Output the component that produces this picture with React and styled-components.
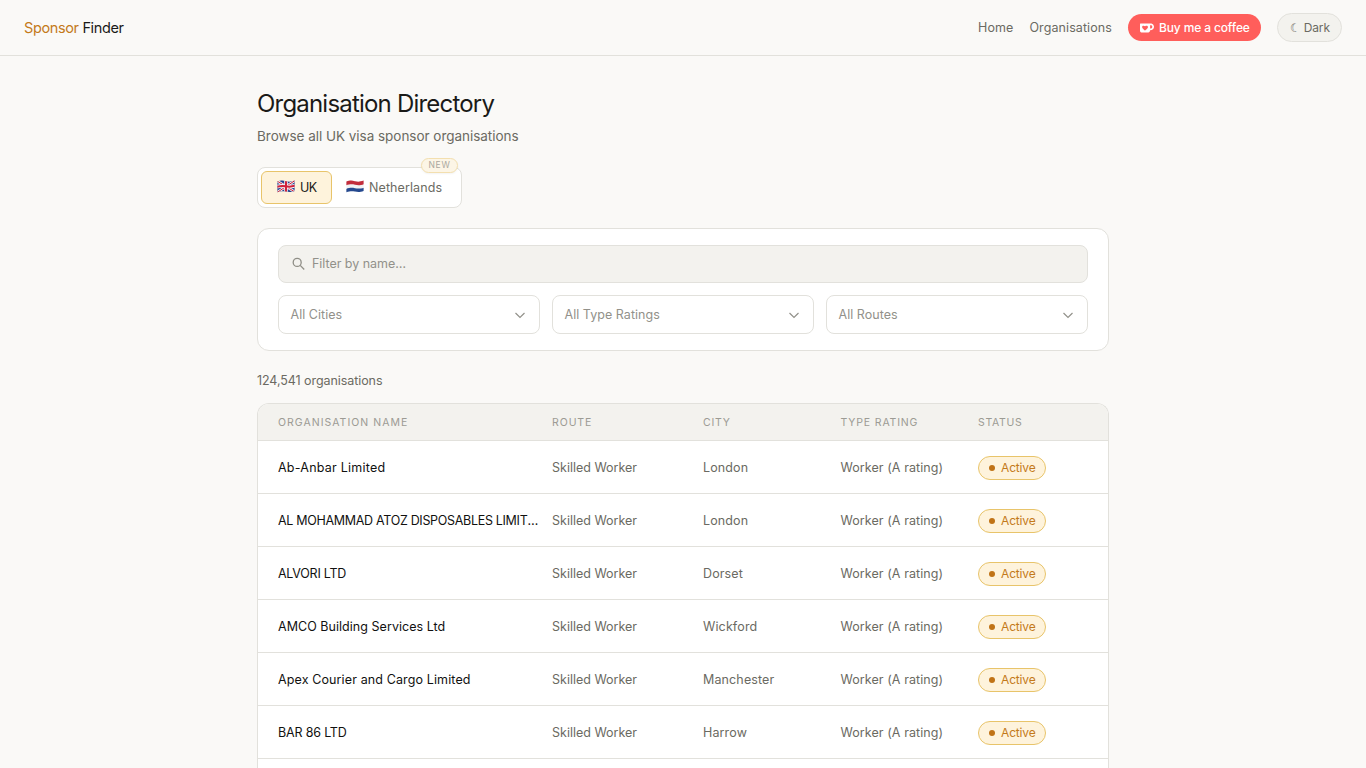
import React from 'react';
import styled, { createGlobalStyle } from 'styled-components';

const organisations = [
  { name: 'Ab-Anbar Limited', city: 'London', track: 0.24 },
  { name: 'AL MOHAMMAD ATOZ DISPOSABLES LIMITED', city: 'London', track: -0.31 },
  { name: 'ALVORI LTD', city: 'Dorset', track: -0.25 },
  { name: 'AMCO Building Services Ltd', city: 'Wickford', track: 0.04 },
  { name: 'Apex Courier and Cargo Limited', city: 'Manchester', track: 0.12 },
  { name: 'BAR 86 LTD', city: 'Harrow', track: -0.17 },
];

function UkFlag() {
  return (
    <Flag viewBox="0 0 18 13">
      <clipPath id="uk"><path d="M0.4 1.6C4 0.2 6 0.4 9 1.2S14 1.8 17.6 0.6V11C14 12.3 12 12.3 9 11.6S4 11 0.4 12.2Z" /></clipPath>
      <g clipPath="url(#uk)">
        <rect width="18" height="13" fill="#27428f" />
        <path d="M0 1L18 12M18 0.5L0 12.5" stroke="#f3f0f2" strokeWidth="2.6" />
        <path d="M0 1L18 12M18 0.5L0 12.5" stroke="#d0213a" strokeWidth="1" />
        <path d="M9 0V13M0 6.7C4 5.5 6 5.6 9 6.3S14 6.9 18 5.8" stroke="#f3f0f2" strokeWidth="3.6" fill="none" />
        <path d="M9 0V13M0 6.7C4 5.5 6 5.6 9 6.3S14 6.9 18 5.8" stroke="#d0213a" strokeWidth="2" fill="none" />
      </g>
    </Flag>
  );
}

function NlFlag() {
  return (
    <Flag viewBox="0 0 18 13">
      <clipPath id="nl"><path d="M0.4 1.6C4 0.2 6 0.4 9 1.2S14 1.8 17.6 0.6V11C14 12.3 12 12.3 9 11.6S4 11 0.4 12.2Z" /></clipPath>
      <g clipPath="url(#nl)">
        <rect width="18" height="13" fill="#f1f1f3" />
        <path d="M0 0H18V4.2C14 5.4 12 5.4 9 4.7S4 4 0 5.2Z" fill="#c22c3b" />
        <path d="M0 8.9C4 7.6 6 7.6 9 8.2S14 8.8 18 7.7V13H0Z" fill="#25498f" />
      </g>
    </Flag>
  );
}

function App() {
  return (
    <Page>
      <GlobalStyle />
      <Header>
        <Logo><span>Sponsor</span> Finder</Logo>
        <Nav>
          <NavLink>Home</NavLink>
          <NavLink>Organisations</NavLink>
          <CoffeeButton>
            <svg viewBox="0 0 24 24" width="14" height="14" fill="#fff">
              <path d="M23.881 8.948c-.773-4.085-4.859-4.593-4.859-4.593H.723c-.604 0-.679.798-.679.798s-.082 7.324-.022 11.822c.164 2.424 2.586 2.672 2.586 2.672s8.267-.023 11.966-.049c2.438-.426 2.683-2.566 2.658-3.734 4.352.24 7.422-2.831 6.649-6.916zm-11.062 3.511c-1.246 1.453-4.011 3.976-4.011 3.976s-.121.119-.31.023c-.076-.057-.108-.09-.108-.09-.443-.441-3.368-3.049-4.034-3.954-.709-.965-1.041-2.7-.091-3.71.951-1.01 3.005-1.086 4.363.407 0 0 1.565-1.782 3.468-.963 1.904.82 1.832 3.011.723 4.311zm6.173.478c-.928.116-1.682.028-1.682.028V7.284h1.77s1.971.551 1.971 2.638c0 1.913-.985 2.667-2.059 3.015z" />
            </svg>
            Buy me a coffee
          </CoffeeButton>
          <ThemeButton><Moon>☾</Moon>Dark</ThemeButton>
        </Nav>
      </Header>

      <Main>
        <Title>Organisation Directory</Title>
        <Subtitle>Browse all UK visa sponsor organisations</Subtitle>

        <Tabs>
          <Tab $active><UkFlag />UK</Tab>
          <Tab><NlFlag />Netherlands</Tab>
          <NewBadge>NEW</NewBadge>
        </Tabs>

        <Filters>
          <Search>
            <svg viewBox="0 0 14 14" width="14" height="14" fill="none" stroke="#8f8e86" strokeWidth="1.3">
              <circle cx="5.2" cy="5.4" r="4" />
              <path d="M8.2 8.4L12.2 12.5" />
            </svg>
            <span>Filter by name…</span>
          </Search>
          <Selects>
            {['All Cities', 'All Type Ratings', 'All Routes'].map((label) => (
              <Select key={label}>
                {label}
                <svg viewBox="0 0 12 8" width="12" height="8" fill="none" stroke="#92918a" strokeWidth="1.2">
                  <path d="M1.5 2L6 6.4L10.5 2" />
                </svg>
              </Select>
            ))}
          </Selects>
        </Filters>

        <Count>124,541 organisations</Count>

        <Table>
          <HeadRow>
            <HeadCell $track={1.02}>ORGANISATION NAME</HeadCell>
            <HeadCell $track={0.92}>ROUTE</HeadCell>
            <HeadCell>CITY</HeadCell>
            <HeadCell $track={0.84}>TYPE RATING</HeadCell>
            <HeadCell $track={0.7}>STATUS</HeadCell>
          </HeadRow>
          {organisations.map((org) => (
            <Row key={org.name}>
              <Name $track={org.track}>{org.name}</Name>
              <Cell>Skilled Worker</Cell>
              <Cell $track={0.13}>{org.city}</Cell>
              <Cell $track={0.08}>Worker (A rating)</Cell>
              <Status>Active</Status>
            </Row>
          ))}
        </Table>
      </Main>
    </Page>
  );
}

const GlobalStyle = createGlobalStyle`
  * {
    box-sizing: border-box;
  }

  body {
    margin: 0;
    background-color: #FAF9F7;
    color: #1A1A18;
    font-family: Inter, "Liberation Sans", sans-serif;
    font-size: 12.5px;
  }
`

const Page = styled.div`
  height: 768px;
  display: flex;
  flex-direction: column;
`

const Header = styled.header`
  height: 56px;
  flex-shrink: 0;
  padding: 0 24px;
  border-bottom: 1px solid #E2E1DC;
  display: flex;
  align-items: center;
  justify-content: space-between;
`

const Logo = styled.div`
  font-size: 14.5px;
  letter-spacing: -0.37px;

  span {
    color: #C47A1A;
  }
`

const Nav = styled.nav`
  display: flex;
  align-items: center;
  gap: 16px;
`

const NavLink = styled.a`
  color: #6B6A62;
  letter-spacing: 0.09px;
`

const CoffeeButton = styled.button`
  width: 133px;
  height: 27px;
  padding: 0 0 0 12px;
  border: none;
  border-radius: 14px;
  background-color: #FF5E5B;
  color: #FFFFFF;
  display: flex;
  align-items: center;
  gap: 5px;
  font: 500 12px Inter, sans-serif;
  letter-spacing: -0.13px;
  white-space: nowrap;
`

const ThemeButton = styled.button`
  width: 65px;
  height: 29px;
  padding: 0 0 0 12px;
  border: 1px solid #E2E1DC;
  border-radius: 15px;
  background-color: #F3F2EE;
  color: #6B6A62;
  display: flex;
  align-items: center;
  gap: 3px;
  font: 12px Inter, sans-serif;
  letter-spacing: -0.1px;
`

const Moon = styled.span`
  font: 12px "DejaVu Sans", sans-serif;
`

const Main = styled.main`
  width: 852px;
  flex: 1;
  min-height: 0;
  margin: 0 auto;
  padding-top: 32px;
  display: flex;
  flex-direction: column;
`

const Title = styled.h1`
  margin: 0;
  font-size: 24px;
  line-height: 32px;
  font-weight: 400;
  letter-spacing: -0.8px;
`

const Subtitle = styled.p`
  margin: 6px 0 21px;
  color: #6B6A62;
  font-size: 13.5px;
  line-height: 20px;
  letter-spacing: -0.03px;
`

const Tabs = styled.div`
  position: relative;
  width: 205px;
  height: 41px;
  padding: 3px;
  border: 1px solid #E2E1DC;
  border-radius: 8px;
  background-color: #FFFFFF;
  display: flex;
`

const Tab = styled.button`
  height: 33px;
  width: ${(props) => (props.$active ? '71px' : '126px')};
  padding: 0 0 0 ${(props) => (props.$active ? '14.5px' : '12.5px')};
  border: 1px solid ${(props) => (props.$active ? '#E8C46A' : 'transparent')};
  border-radius: 6px;
  background-color: ${(props) => (props.$active ? '#FEF3DC' : 'transparent')};
  color: ${(props) => (props.$active ? '#1A1A18' : '#6B6A62')};
  display: flex;
  align-items: center;
  gap: 5.5px;
  font: 12.5px Inter, sans-serif;
  letter-spacing: ${(props) => (props.$active ? '-0.5px' : '0.1px')};
`

const Flag = styled.svg`
  width: 18px;
  height: 13px;
  margin-top: -3px;
`

const NewBadge = styled.span`
  position: absolute;
  top: -10px;
  right: 3px;
  width: 37px;
  height: 15px;
  border: 1px solid #F3DFAF;
  border-radius: 8px;
  background-color: #FCF5E6;
  color: #A9A79E;
  font-size: 8.5px;
  line-height: 13px;
  letter-spacing: 0.7px;
  text-align: center;
  box-shadow: 0 1px 2px rgba(0, 0, 0, 0.05);
`

const Filters = styled.section`
  margin-top: 20px;
  height: 123px;
  flex-shrink: 0;
  padding: 16px 20px;
  border: 1px solid #E2E1DC;
  border-radius: 12px;
  background-color: #FFFFFF;
`

const Search = styled.div`
  height: 38px;
  padding: 0 13px;
  border: 1px solid #E2E1DC;
  border-radius: 8px;
  background-color: #F3F2EE;
  color: #92918A;
  display: flex;
  align-items: center;
  gap: 6px;

  span {
    padding-bottom: 2px;
    letter-spacing: -0.04px;
  }
`

const Selects = styled.div`
  margin-top: 12px;
  display: grid;
  grid-template-columns: repeat(3, 1fr);
  gap: 12px;
`

const Select = styled.div`
  height: 39px;
  padding: 0 13px 0 11.5px;
  border: 1px solid #E2E1DC;
  border-radius: 8px;
  background-color: #FFFFFF;
  color: #92918A;
  display: flex;
  align-items: center;
  justify-content: space-between;
  letter-spacing: 0.04px;
`

const Count = styled.p`
  margin: 20px 0 12px;
  line-height: 20px;
  color: #6B6A62;
  letter-spacing: -0.07px;
`

const Table = styled.section`
  flex: 1;
  min-height: 0;
  border: 1px solid #E2E1DC;
  border-bottom: none;
  border-radius: 12px 12px 0 0;
  background-color: #FFFFFF;
  overflow: hidden;
`

const Row = styled.div`
  height: 53px;
  padding: 0 20px;
  border-bottom: 1px solid #E2E1DC;
  display: grid;
  grid-template-columns: 262px 139px 125.5px 125.5px 1fr;
  column-gap: 12px;
  align-items: center;
`

const HeadRow = styled(Row)`
  height: 37px;
  background-color: #F3F2EE;
`

const HeadCell = styled.span`
  color: #9C9B94;
  font-size: 10.5px;
  letter-spacing: ${(props) => props.$track || 0.8}px;
`

const Name = styled.span`
  overflow: hidden;
  text-overflow: ellipsis;
  white-space: nowrap;
  color: #111110;
  letter-spacing: ${(props) => props.$track}px;
`

const Cell = styled.span`
  color: #6B6A62;
  letter-spacing: ${(props) => props.$track || 0}px;
`

const Status = styled.span`
  width: 68px;
  height: 24px;
  margin-top: 1px;
  padding-left: 10px;
  border: 1px solid #E8C46A;
  border-radius: 12px;
  background-color: #FEF3DC;
  color: #C47A1A;
  font-size: 12px;
  letter-spacing: -0.15px;
  display: flex;
  align-items: center;
  gap: 6px;

  &::before {
    content: '';
    width: 6px;
    height: 6px;
    border-radius: 50%;
    background-color: #C07317;
  }
`

export default App;
